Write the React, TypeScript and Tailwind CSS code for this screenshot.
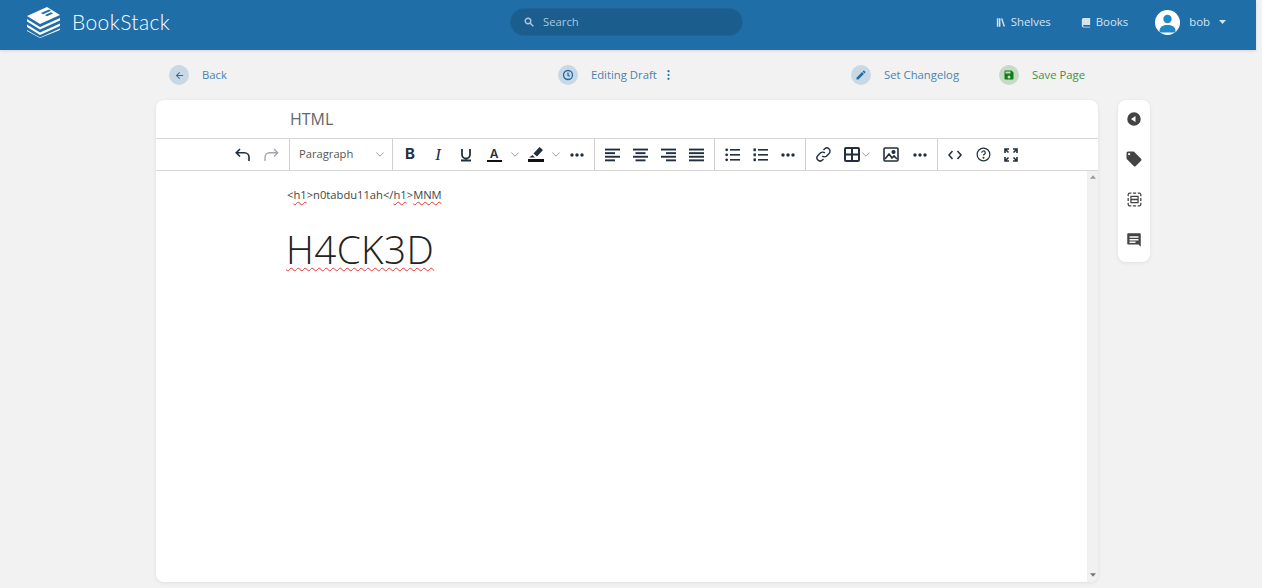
import React from "react";

const Sq = ({ children, s = 20, cls = "" }: { children: React.ReactNode; s?: number; cls?: string }) => (
  <svg width={s} height={s} viewBox="0 0 24 24" className={cls} fill="currentColor">{children}</svg>
);

const Chev = ({ cls = "" }: { cls?: string }) => (
  <svg width="8" height="5" viewBox="0 0 8 5" className={cls} fill="none" stroke="#9a9a9a" strokeWidth="1"><path d="M.4.6 4 4.200 7.600.6" /></svg>
);

const Dots = () => (
  <svg width="14" height="4" viewBox="0 0 14 4" fill="#222f3e"><circle cx="2" cy="2" r="1.7" /><circle cx="7" cy="2" r="1.7" /><circle cx="12" cy="2" r="1.7" /></svg>
);

const Lines = ({ rows }: { rows: [number, number][] }) => (
  <svg width="15" height="14" viewBox="0 0 15 14" fill="#222f3e">
    {rows.map(([x, w], i) => <rect key={i} x={x} y={i * 3.6 + 0.6} width={w} height="1.9" />)}
  </svg>
);

const Btn = ({ children, w = "w-7" }: { children: React.ReactNode; w?: string }) => (
  <div className={`${w} h-7 flex items-center justify-center text-[#222f3e]`}>{children}</div>
);

const Group = ({ children, cls = "pl-[3px] pr-[3px]" }: { children: React.ReactNode; cls?: string }) => (
  <div className={`flex items-center h-full border-r border-[#cfcfcf] ${cls}`}>{children}</div>
);

const Action = ({ children, label, color, bg }: { children: React.ReactNode; label: string; color: string; bg: string }) => (
  <div className="flex items-center gap-[13px] text-[11.3px]" style={{ color }}>
    <div className="w-5 h-5 rounded-full flex items-center justify-center" style={{ background: bg }}>{children}</div>
    <span>{label}</span>
  </div>
);

const List = ({ num }: { num?: boolean }) => (
  <svg width="15" height="14" viewBox="0 0 15 14" fill="#222f3e">
    {[1, 6, 11].map((y) => <g key={y}><rect x="5" y={y} width="10" height="1.6" />{num ? <rect x="0.5" y={y - 0.6} width="2.4" height="2.8" /> : <circle cx="1.7" cy={y + 0.8} r="1.4" />}</g>)}
  </svg>
);

const Wavy = ({ children }: { children: React.ReactNode }) => (
  <span className="underline decoration-wavy decoration-[#e33] decoration-1 underline-offset-2">{children}</span>
);

export default function App() {
  return (
    <div className="w-[1262px] h-[588px] overflow-hidden bg-[#f2f2f2] text-[#444] flex flex-col font-['Open_Sans','Noto_Sans',sans-serif]">
      <header className="h-[50px] w-[1256px] shrink-0 bg-[#206ea7] text-white flex items-center pb-[6px] shadow-[0_1px_3px_rgba(0,0,0,0.12)]">
        <div className="flex items-center ml-[26px] w-[484px]">
          <svg width="35" height="32" viewBox="0 0 35 32" fill="#fff">
            <path d="M1 10 21 1l13 8-20 9z" />
            <path d="M1 13l13 8 20-9v2.400l-20 9-13-8z" />
            <path d="M1 18.500l13 8 20-9v2.400l-20 9-13-8z" />
            <path d="M1 24l13 7.500 20-9v1.600l-20 8-13-7z" opacity=".95" />
            <path d="M15 7l8-3.500 2 1.200-8 3.500zM19 9l6-2.700 2 1.200-6 2.700z" fill="#206ea7" />
          </svg>
          <span className="ml-[11px] text-[21px] font-light font-['Lato'] tracking-[0.4px]">BookStack</span>
        </div>
        <div className="w-[233px] h-[28px] rounded-full bg-[#1b5d8d] border border-[#1f6496] flex items-center pl-[13px] text-[#a9c8de] text-[11.3px]">
          <svg width="10" height="10" viewBox="0 0 10 10" fill="none" stroke="currentColor" strokeWidth="1.400"><circle cx="4" cy="4" r="2.800" /><path d="m6 6 3.300 3.300" /></svg>
          <span className="ml-[9px]">Search</span>
        </div>
        <div className="flex items-center ml-auto text-[#d4e4ef] text-[11.4px]">
          <svg width="10" height="11" viewBox="0 0 12 12" fill="currentColor"><path d="M1 1h1.800v10H1zM3.500 1h1.800v10H3.500zM6 1.500l1.600-.5 3.200 9.500-1.600.6z" /></svg>
          <span className="ml-[5px]">Shelves</span>
          <svg className="ml-[30px]" width="10" height="11" viewBox="0 0 12 12" fill="currentColor"><path d="M3 .5h8V9H3.500a1 1 0 0 0 0 2H11v1H3a2 2 0 0 1-2-2V2.500a2 2 0 0 1 2-2z" /></svg>
          <span className="ml-[5px]">Books</span>
          <div className="ml-[27px] w-[25px] h-[25px] rounded-full bg-white overflow-hidden">
            <svg width="25" height="25" viewBox="0 0 25 25" fill="#1f88c9"><circle cx="12.500" cy="9" r="4.200" /><path d="M4.500 21c0-4.500 4-6 8-6s8 1.500 8 6v1.500h-16z" /></svg>
          </div>
          <span className="ml-[9px]">bob</span>
          <svg className="ml-[9px] mr-[30px]" width="7" height="4" viewBox="0 0 7 4" fill="currentColor"><path d="M0 0h7L3.500 4z" /></svg>
        </div>
      </header>

      <div className="w-[1262px] pl-[156px] flex">
        <div className="w-[942px] flex flex-col">
          <div className="h-[50px] flex items-center pl-[13px] pr-[13px]">
            <Action label="Back" color="#4a82ad" bg="#c9d8e5">
              <svg width="11" height="11" viewBox="0 0 24 24" fill="#206ea7"><path d="M20 11H8l5-5-1.500-1.500L4 12l7.500 7.500L13 18l-5-5h12z" /></svg>
            </Action>
            <div className="flex items-center gap-[13px] text-[11.3px] text-[#4a82ad] ml-[331px]">
              <div className="w-5 h-5 rounded-full bg-[#c9d8e5] flex items-center justify-center">
                <svg width="12" height="12" viewBox="0 0 24 24" fill="none" stroke="#206ea7" strokeWidth="2.600"><circle cx="12" cy="12" r="9" /><path d="M12 7v5.500l3.500 2" /></svg>
              </div>
              <span>Editing Draft</span>
              <svg className="-ml-[3px]" width="3" height="10" viewBox="0 0 3 10" fill="#206ea7"><circle cx="1.500" cy="1.200" r="1.100" /><circle cx="1.500" cy="5" r="1.100" /><circle cx="1.500" cy="8.800" r="1.100" /></svg>
            </div>
            <div className="flex items-center gap-[40px] ml-auto">
              <Action label="Set Changelog" color="#4a82ad" bg="#c9d8e5">
                <svg width="12" height="12" viewBox="0 0 24 24" fill="#206ea7"><path d="M3 17.250V21h3.750L17.800 9.940l-3.750-3.750zM20.700 7.040a1 1 0 0 0 0-1.410l-2.340-2.340a1 1 0 0 0-1.410 0l-1.830 1.830 3.750 3.750z" /></svg>
              </Action>
              <Action label="Save Page" color="#3f8f44" bg="#c5dbc6">
                <svg width="12" height="12" viewBox="0 0 24 24" fill="#0f7d15"><path d="M17 3H5a2 2 0 0 0-2 2v14a2 2 0 0 0 2 2h14a2 2 0 0 0 2-2V7zm-5 16a3 3 0 1 1 0-6 3 3 0 0 1 0 6zm3-10H5V5h10z" /></svg>
              </Action>
            </div>
          </div>

          <div className="h-[482px] bg-white rounded-lg flex flex-col overflow-hidden shadow-[0_1px_4px_rgba(0,0,0,0.08)]">
            <div className="h-[38px] shrink-0 pl-[134px] flex items-center text-[16px] text-[#666]">HTML</div>
            <div className="h-[33px] shrink-0 border-y border-[#d8d8d8] flex items-center pl-[69px]">
              <Group cls="pl-[4px] pr-[4px]">
                <Btn><svg width="18" height="18" viewBox="0 0 24 24" fill="none" stroke="currentColor" strokeWidth="2.200"><path d="M8 4 3 9l5 5M3.500 9H14a6 6 0 0 1 6 6v5" /></svg></Btn>
                <Btn><svg width="18" height="18" viewBox="0 0 24 24" fill="none" stroke="#a0a6ac" strokeWidth="1.800"><path d="m16 4 5 5-5 5M20.500 9H10a6 6 0 0 0-6 6v5" /></svg></Btn>
              </Group>
              <div className="flex items-center justify-between w-[103px] h-full pl-[9px] pr-[8px] border-r border-[#cfcfcf] text-[11.2px] text-[#555]">
                <span>Paragraph</span>
                <Chev />
              </div>
              <Group cls="pl-[3px] pr-[7px]">
                <Btn><span className="font-bold text-[15px] font-['Inter']">B</span></Btn>
                <Btn><span className="italic text-[17px] font-['Liberation_Serif']">I</span></Btn>
                <Btn><svg width="12" height="14" viewBox="0 0 12 14" fill="none" stroke="currentColor" strokeWidth="1.800"><path d="M2 1v5.500a4 4 0 0 0 8 0V1M1 12.500h10" /></svg></Btn>
                <div className="w-7 flex flex-col items-center text-[#222f3e]"><span className="text-[12px] leading-[13px] font-semibold font-['Inter']">A</span><span className="w-[15px] h-[2.500px] bg-[#111]" /></div>
                <Chev cls="ml-[3px]" />
                <div className="w-[18px] ml-[8px] flex flex-col items-center"><svg width="15" height="12" viewBox="0 0 15 12" fill="#222f3e"><path d="M10.500 0 14 3 8 9.500l-3.500-3zM3.500 8 6 10.500H0z" /></svg><span className="w-[16px] h-[2.500px] bg-[#111]" /></div>
                <Chev cls="ml-[7px]" />
                <div className="ml-[7px]"><Btn w="w-[20px]"><Dots /></Btn></div>
              </Group>
              <Group cls="pl-[3px] pr-[4px]">
                <Btn><Lines rows={[[0, 15], [0, 10], [0, 15], [0, 10]]} /></Btn>
                <Btn><Lines rows={[[0, 15], [2.500, 10], [0, 15], [2.500, 10]]} /></Btn>
                <Btn><Lines rows={[[0, 15], [5, 10], [0, 15], [5, 10]]} /></Btn>
                <Btn><Lines rows={[[0, 15], [0, 15], [0, 15], [0, 15]]} /></Btn>
              </Group>
              <Group>
                <Btn><List /></Btn>
                <Btn><List num /></Btn>
                <Btn><Dots /></Btn>
              </Group>
              <Group cls="pl-[3px] pr-[2px]">
                <Btn><svg width="17" height="17" viewBox="0 0 24 24" fill="none" stroke="currentColor" strokeWidth="2"><path d="M10 14a4.500 4.500 0 0 0 6.400 0l3.500-3.500a4.500 4.500 0 0 0-6.400-6.400L12 5.600" /><path d="M14 10a4.500 4.500 0 0 0-6.400 0l-3.500 3.500a4.500 4.500 0 0 0 6.400 6.400l1.500-1.500" /></svg></Btn>
                <div className="flex items-center w-[40px] pl-[7px]">
                  <svg width="16" height="15" viewBox="0 0 16 15" fill="none" stroke="#222f3e" strokeWidth="2"><rect x="1" y="1" width="14" height="13" rx="1" /><path d="M1 7.500h14M8 1v13" /></svg>
                  <Chev cls="ml-[2px]" />
                </div>
                <Btn><svg width="16" height="15" viewBox="0 0 16 15" fill="none" stroke="#222f3e" strokeWidth="1.600"><rect x="1" y="1" width="14" height="13" rx="1" /><circle cx="10.500" cy="5" r="1.300" fill="#222f3e" /><path d="m2 12 4-5 3 4 2-2 3 3" /></svg></Btn>
                <Btn w="w-[30px]"><Dots /></Btn>
              </Group>
              <div className="flex items-center h-full pl-[3px]">
                <Btn><svg width="14" height="10" viewBox="0 0 14 10" fill="none" stroke="currentColor" strokeWidth="1.500"><path d="M4.500 1 1 5l3.500 4M9.500 1 13 5 9.500 9" /></svg></Btn>
                <Btn><svg width="17" height="17" viewBox="0 0 24 24" fill="none" stroke="currentColor" strokeWidth="1.700"><circle cx="12" cy="12" r="9" /><path d="M9.500 9.500a2.500 2.500 0 1 1 3.500 2.300c-.7.3-1 .8-1 1.700" /><circle cx="12" cy="16.700" r=".6" /></svg></Btn>
                <Btn><svg width="14" height="14" viewBox="0 0 14 14" fill="none" stroke="currentColor" strokeWidth="1.600"><path d="M1 5V1h4M9 1h4v4M13 9v4H9M5 13H1V9M1.500 1.500l3 3M12.500 1.500l-3 3M12.500 12.500l-3-3M1.500 12.500l3-3" /></svg></Btn>
              </div>
            </div>
            <div className="flex flex-1 min-h-0">
              <div className="flex-1 pl-[130px] pt-[16px] text-[#333]">
                <div className="ml-[1px] text-[11.2px] leading-[16px] text-[#444]">
                  &lt;<Wavy>h1</Wavy>&gt;n0tabdu11ah&lt;/<Wavy>h1</Wavy>&gt;<Wavy>MNM</Wavy>
                </div>
                <div className="mt-[22px] text-[38.7px] leading-[48px] font-[350] tracking-[0.4px] text-[#222] underline decoration-wavy decoration-[#e33] decoration-1 underline-offset-[3px]">H4CK3D</div>
              </div>
              <div className="w-[11px] shrink-0 bg-[#f1f1f1] flex flex-col justify-between items-center pt-[4px] pb-[5px]">
                <svg width="6" height="4" viewBox="0 0 7 4" fill="#9a9a9a"><path d="M3.500 0 7 4H0z" /></svg>
                <svg width="6" height="4" viewBox="0 0 7 4" fill="#777"><path d="M0 0h7L3.500 4z" /></svg>
              </div>
            </div>
          </div>
        </div>

        <div className="ml-[20px] mt-[50px] w-[32px] h-[162px] bg-white rounded-lg shadow-[0_1px_4px_rgba(0,0,0,0.08)] flex flex-col items-center gap-[22px] py-[10px] text-[#444]">
          <Sq s={18}><path fillRule="evenodd" d="M12 3a9 9 0 1 0 0 18 9 9 0 0 0 0-18zm2 5v8l-6-4z" /></Sq>
          <Sq s={18}><path fillRule="evenodd" d="M21.400 11.600l-9-9A2 2 0 0 0 11 2H4a2 2 0 0 0-2 2v7a2 2 0 0 0 .6 1.400l9 9a2 2 0 0 0 2.800 0l7-7a2 2 0 0 0 0-2.800zM5.500 7A1.500 1.500 0 1 1 5.500 4a1.500 1.500 0 0 1 0 3z" /></Sq>
          <svg width="19" height="19" viewBox="0 0 24 24" fill="none" stroke="currentColor" strokeWidth="1.600"><path d="M8 4H6a2 2 0 0 0-2 2v2M16 4h2a2 2 0 0 1 2 2v2M4 16v2a2 2 0 0 0 2 2h2M20 16v2a2 2 0 0 1-2 2h-2M10 4h4M10 20h4M4 10v4M20 10v4" /><path d="M7.500 8h9v8h-9zM7.500 12h9" /></svg>
          <Sq s={18}><path fillRule="evenodd" d="M20 3H4a1 1 0 0 0-1 1v13a1 1 0 0 0 1 1h14l3 3V4a1 1 0 0 0-1-1zM6 7h12v2H6zm0 3.500h12v2H6zM6 14h8v2H6z" /></Sq>
        </div>
      </div>
    </div>
  );
}
